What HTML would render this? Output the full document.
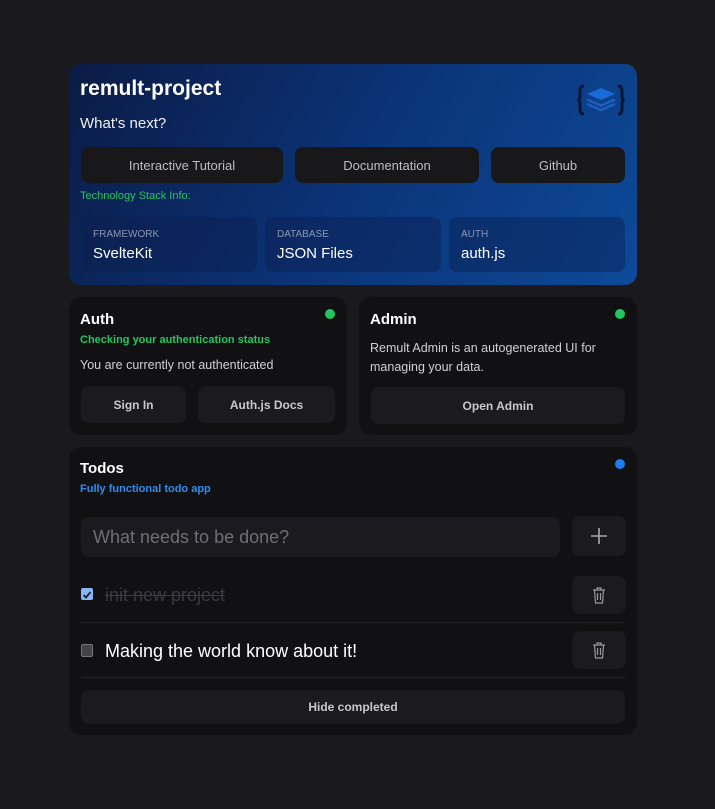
<!DOCTYPE html>
<html><head><meta charset="utf-8"><style>
*{box-sizing:border-box;margin:0;padding:0}
body{width:715px;height:809px;background:#1a1a1e;font-family:"Liberation Sans","DejaVu Sans",sans-serif;position:relative;overflow:hidden;color:#fff}
.a{position:absolute}
.card{position:absolute;background:#111114;border-radius:12px}
.btn{position:absolute;background:#1b1b1f;border-radius:8px;color:#c8c8cc;font-size:12px;font-weight:bold;display:flex;align-items:center;justify-content:center}
.hbtn{background:#18181b;color:#bdbdc2;font-weight:normal;font-size:13px}
.stk{position:absolute;top:217px;height:55px;border-radius:8px;background:rgba(10,30,80,.45);padding:12px 12px}
.stk .l{font-size:10px;color:#8a96b0}
.stk .v{font-size:15px;color:#fff;margin-top:5px}
.dot{position:absolute;width:10px;height:10px;border-radius:50%}
.t{position:absolute;font-weight:bold}
</style></head><body>
<div class="card" style="left:69px;top:64px;width:568px;height:221px;background:linear-gradient(120deg,#0b1b45 0%,#0b3377 50%,#0c4a99 100%)"></div>
<div class="t" style="left:80px;top:77px;font-size:21px">remult-project</div>
<div class="a" style="left:80px;top:115px;font-size:15px;color:#f0f0f0">What's next?</div>
<svg class="a" style="left:576px;top:84px" width="50" height="32" viewBox="0 0 50 32">
<path d="M8 2 Q4 2 4 7 V12 Q4 16 1.5 16 Q4 16 4 20 V25 Q4 30 8 30" fill="none" stroke="#081636" stroke-width="3"/>
<path d="M42 2 Q46 2 46 7 V12 Q46 16 48.5 16 Q46 16 46 20 V25 Q46 30 42 30" fill="none" stroke="#081636" stroke-width="3"/>
<path d="M11 20 L25 26 L39 20" fill="none" stroke="#1d5fc0" stroke-width="2.5"/>
<path d="M11 15.5 L25 21.5 L39 15.5" fill="none" stroke="#1d5fc0" stroke-width="2.5"/>
<path d="M11 10 L25 4 L39 10 L25 16Z" fill="#1a6ad8"/>
</svg>
<div class="btn hbtn" style="left:81px;top:147px;width:202px;height:36px">Interactive Tutorial</div>
<div class="btn hbtn" style="left:295px;top:147px;width:184px;height:36px">Documentation</div>
<div class="btn hbtn" style="left:491px;top:147px;width:134px;height:36px">Github</div>
<div class="a" style="left:80px;top:190px;font-size:11px;color:#22c55e">Technology Stack Info:</div>
<div class="stk" style="left:81px;width:176px"><div class="l">FRAMEWORK</div><div class="v">SvelteKit</div></div>
<div class="stk" style="left:265px;width:176px"><div class="l">DATABASE</div><div class="v">JSON Files</div></div>
<div class="stk" style="left:449px;width:176px"><div class="l">AUTH</div><div class="v">auth.js</div></div>

<div class="card" style="left:69px;top:297px;width:278px;height:138px"></div>
<div class="t" style="left:80px;top:311px;font-size:15px">Auth</div>
<div class="dot" style="left:325px;top:309px;background:#22c55e"></div>
<div class="t" style="left:80px;top:334px;font-size:11px;color:#22c55e">Checking your authentication status</div>
<div class="a" style="left:80px;top:358px;font-size:12.5px;color:#d0d0d4">You are currently not authenticated</div>
<div class="btn" style="left:81px;top:386px;width:105px;height:37px">Sign In</div>
<div class="btn" style="left:198px;top:386px;width:137px;height:37px">Auth.js Docs</div>

<div class="card" style="left:359px;top:297px;width:278px;height:138px"></div>
<div class="t" style="left:370px;top:311px;font-size:15px">Admin</div>
<div class="dot" style="left:615px;top:309px;background:#22c55e"></div>
<div class="a" style="left:370px;top:339px;font-size:12.5px;color:#d0d0d4;line-height:19px;width:250px">Remult Admin is an autogenerated UI for managing your data.</div>
<div class="btn" style="left:371px;top:387px;width:254px;height:37px">Open Admin</div>

<div class="card" style="left:69px;top:447px;width:568px;height:288px"></div>
<div class="t" style="left:80px;top:460px;font-size:15px">Todos</div>
<div class="dot" style="left:615px;top:459px;background:#1d7df0"></div>
<div class="t" style="left:80px;top:483px;font-size:11px;color:#2d8cf0">Fully functional todo app</div>
<div class="a" style="left:81px;top:517px;width:479px;height:40px;background:#1b1b1f;border-radius:8px;padding:10px 12px;font-size:18px;color:#6e6e74">What needs to be done?</div>
<div class="btn" style="left:572px;top:516px;width:54px;height:40px"><svg width="18" height="18" viewBox="0 0 18 18"><path d="M9 1V17M1 9H17" stroke="#aaa" stroke-width="1.6"/></svg></div>
<div class="a" style="left:81px;top:588px;width:12px;height:12px;background:#8ab4f8;border-radius:2px"><svg width="12" height="12" viewBox="0 0 12 12"><path d="M2.5 6 L5 8.5 L9.5 3" fill="none" stroke="#222" stroke-width="1.8"/></svg></div>
<div class="a" style="left:105px;top:585px;font-size:18px;color:#3a3a42;text-decoration:line-through">init new project</div>
<div class="btn" style="left:572px;top:576px;width:54px;height:38px"><svg width="14" height="18" viewBox="0 0 14 18"><path d="M1 4H13M5 4V2H9V4M2.5 4 L3.5 17 H10.5 L11.5 4M5.5 7V14M8.5 7V14" fill="none" stroke="#999" stroke-width="1.2"/></svg></div>
<div class="a" style="left:81px;top:622px;width:544px;height:1px;background:#222228"></div>
<div class="a" style="left:81px;top:644px;width:12px;height:13px;background:#444;border:1px solid #777;border-radius:2px"></div>
<div class="a" style="left:105px;top:641px;font-size:18px;color:#fff">Making the world know about it!</div>
<div class="btn" style="left:572px;top:631px;width:54px;height:38px"><svg width="14" height="18" viewBox="0 0 14 18"><path d="M1 4H13M5 4V2H9V4M2.5 4 L3.5 17 H10.5 L11.5 4M5.5 7V14M8.5 7V14" fill="none" stroke="#999" stroke-width="1.2"/></svg></div>
<div class="a" style="left:81px;top:677px;width:544px;height:1px;background:#222228"></div>
<div class="btn" style="left:81px;top:690px;width:544px;height:34px;font-size:12px">Hide completed</div>
</body></html>
